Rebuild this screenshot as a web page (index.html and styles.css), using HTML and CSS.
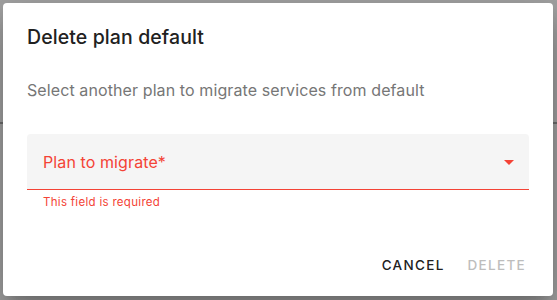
FILE: index.html
```html
<!DOCTYPE html>
<html lang="en">
<head>
  <meta charset="UTF-8">
  <meta name="viewport" content="width=device-width, initial-scale=1.0">
  <title>Delete plan</title>
  <link rel="stylesheet" href="styles.css">
</head>
<body>

<!-- Delete plan dialog -->
<div class="dialog">
  <h2 class="dialog-title">Delete plan default</h2>

  <div class="dialog-content">
    <p class="dialog-text">Select another plan to migrate services from default</p>

    <div class="select-field">
      <span class="select-label">Plan to migrate*</span>
      <svg class="select-icon" viewBox="0 0 24 24" width="24" height="24">
        <path d="M7 10l5 5 5-5z"></path>
      </svg>
    </div>
    <p class="helper-text">This field is required</p>
  </div>

  <div class="dialog-actions">
    <button class="btn">Cancel</button>
    <button class="btn" disabled>Delete</button>
  </div>
</div>

</body>
</html>
```

FILE: styles.css
```css
body {
  font-family: Inter, Roboto, "Liberation Sans", sans-serif;
  margin: 0;
  padding: 3px 4px 4px 3px;
  height: 300px;
  box-sizing: border-box;
  overflow: hidden;
  /* page behind the backdrop */
  background: linear-gradient(to bottom, #a3a3a3 0, #a3a3a3 122px, #6e6e6e 122px, #6e6e6e 124px, #a3a3a3 124px);
  color: rgba(0, 0, 0, 0.87);
}

.dialog {
  width: 550px;
  height: 293px;
  box-sizing: border-box;
  background-color: white;
  border-radius: 4px;
  box-shadow: 0 11px 15px -7px rgba(0, 0, 0, 0.2),
              0 24px 38px 3px rgba(0, 0, 0, 0.14),
              0 9px 46px 8px rgba(0, 0, 0, 0.12);
  display: flex;
  flex-direction: column;
}

.dialog-title {
  margin: 0;
  padding: 18px 24px 14px;
  font-size: 19.5px;
  font-weight: 500;
  line-height: 32px;
  letter-spacing: 0.1px;
  color: #212121;
}

.dialog-content {
  flex: 1;
  padding: 11px 24px 0;
}

.dialog-text {
  margin: 0 0 32px;
  font-size: 16px;
  line-height: 24px;
  letter-spacing: 0.1px;
  color: #767676;
}

.select-field {
  height: 55px;
  background-color: #f5f5f5;
  border-radius: 4px 4px 0 0;
  border-bottom: 1px solid #f44336;
  display: flex;
  align-items: center;
  padding: 0 8px 0 16px;
}

.select-label {
  flex: 1;
  font-size: 16px;
  line-height: 24px;
  letter-spacing: 0.1px;
  color: #f44336;
}

.select-icon {
  fill: #f44336;
}

.helper-text {
  margin: 2px 16px 0;
  font-size: 11.5px;
  line-height: 20px;
  letter-spacing: 0.3px;
  color: #f44336;
}

.dialog-actions {
  display: flex;
  justify-content: flex-end;
  gap: 7px;
  padding: 8px 19px 13px 8px;
}

.btn {
  font-family: inherit;
  font-size: 13.5px;
  font-weight: 500;
  line-height: 24px;
  letter-spacing: 1.3px;
  text-transform: uppercase;
  background: none;
  border: none;
  border-radius: 4px;
  padding: 6px 8px;
  color: #212121;
  cursor: pointer;
}

.btn:disabled {
  color: #bdbdbd;
  cursor: default;
}
```
